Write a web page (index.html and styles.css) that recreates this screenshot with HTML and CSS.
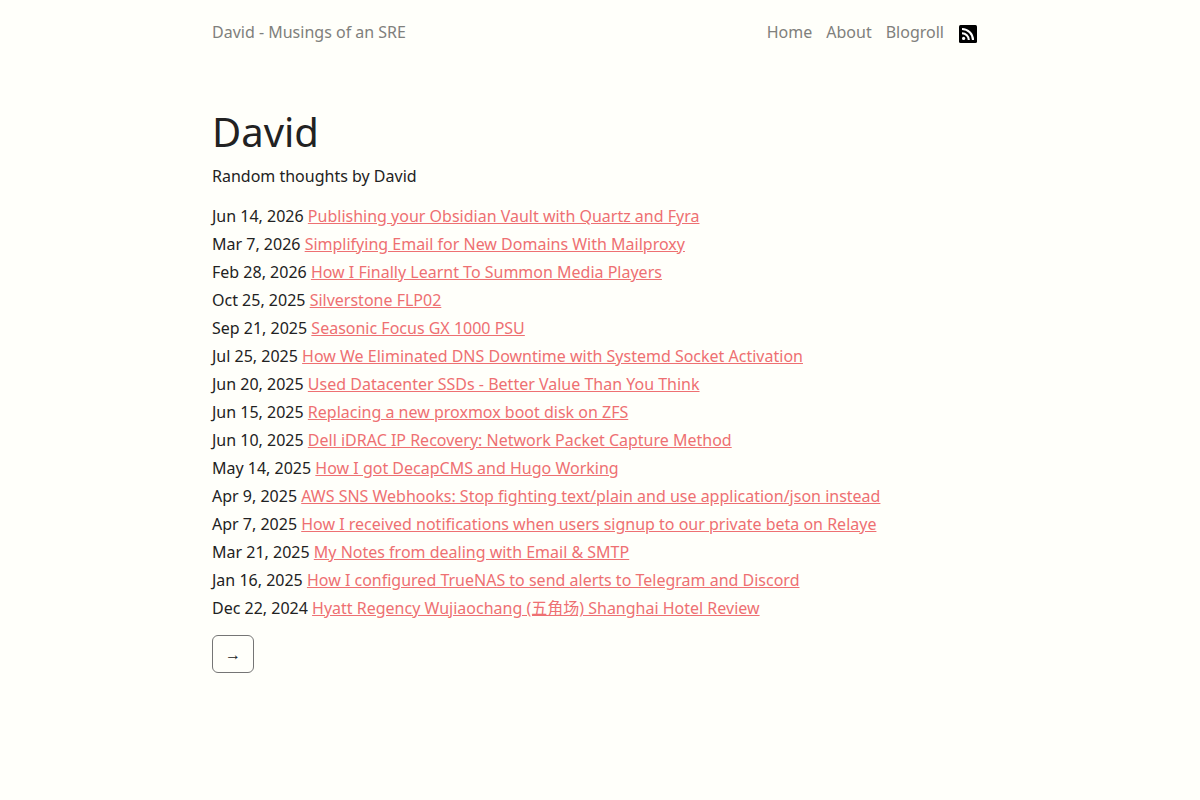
FILE: index.html
```html
<!DOCTYPE html>
<html lang="en">
<head>
<meta charset="utf-8">
<meta name="viewport" content="width=device-width, initial-scale=1">
<title>David - Musings of an SRE</title>
<link rel="stylesheet" href="styles.css">
</head>
<body>
<header class="container site-header">
  <a class="brand" href="/">David - Musings of an SRE</a>
  <nav class="site-nav">
    <a href="/">Home</a>
    <a href="/about/">About</a>
    <a href="/blogroll/">Blogroll</a>
    <a class="rss" href="/index.xml" aria-label="RSS feed"><svg class="rss-icon" viewBox="0 0 18 18" aria-hidden="true"><rect width="18" height="18" rx="1.5"/><g fill="none" stroke="#fff" stroke-width="2.1"><path d="M3 8.2A6.8 6.8 0 0 1 9.8 15M3 4A11 11 0 0 1 14 15"/></g><circle cx="4.6" cy="13.4" r="1.6" fill="#fff"/></svg></a>
  </nav>
</header>
<main class="container">
  <h1>David</h1>
  <p class="intro">Random thoughts by David</p>
  <ul class="posts">
    <li><time>Jun 14, 2026</time> <a href="#">Publishing your Obsidian Vault with Quartz and Fyra</a></li>
    <li><time>Mar 7, 2026</time> <a href="#">Simplifying Email for New Domains With Mailproxy</a></li>
    <li><time>Feb 28, 2026</time> <a href="#">How I Finally Learnt To Summon Media Players</a></li>
    <li><time>Oct 25, 2025</time> <a href="#">Silverstone FLP02</a></li>
    <li><time>Sep 21, 2025</time> <a href="#">Seasonic Focus GX 1000 PSU</a></li>
    <li><time>Jul 25, 2025</time> <a href="#">How We Eliminated DNS Downtime with Systemd Socket Activation</a></li>
    <li><time>Jun 20, 2025</time> <a href="#">Used Datacenter SSDs - Better Value Than You Think</a></li>
    <li><time>Jun 15, 2025</time> <a href="#">Replacing a new proxmox boot disk on ZFS</a></li>
    <li><time>Jun 10, 2025</time> <a href="#">Dell iDRAC IP Recovery: Network Packet Capture Method</a></li>
    <li><time>May 14, 2025</time> <a href="#">How I got DecapCMS and Hugo Working</a></li>
    <li><time>Apr 9, 2025</time> <a href="#">AWS SNS Webhooks: Stop fighting text/plain and use application/json instead</a></li>
    <li><time>Apr 7, 2025</time> <a href="#">How I received notifications when users signup to our private beta on Relaye</a></li>
    <li><time>Mar 21, 2025</time> <a href="#">My Notes from dealing with Email &amp; SMTP</a></li>
    <li><time>Jan 16, 2025</time> <a href="#">How I configured TrueNAS to send alerts to Telegram and Discord</a></li>
    <li><time>Dec 22, 2024</time> <a href="#">Hyatt Regency Wujiaochang (五角场) Shanghai Hotel Review</a></li>
  </ul>
  <a class="next" href="/page/2/" aria-label="Next page">→</a>
</main>
</body>
</html>
```
FILE: styles.css
```css
* { box-sizing: border-box; }

body {
  margin: 0;
  background: #fffffa;
  color: #222222;
  font: 16px/24px "Noto Sans", "Liberation Sans", "Noto Sans CJK SC", sans-serif;
}

.container {
  max-width: 800px;
  margin: 0 auto;
  padding: 0 12px;
}

.site-header {
  display: flex;
  justify-content: space-between;
  align-items: center;
  padding-top: 20px;
}

.site-header a {
  color: #80807c;
  text-decoration: none;
}

.site-nav {
  display: flex;
  gap: 14px;
  padding-right: 11px;
}

.site-nav .rss {
  display: flex;
  align-items: center;
  padding-left: 1px;
}

.rss-icon { width: 18px; height: 18px; margin-top: 4px; }

main.container { padding-top: 64px; }

h1 {
  margin: 0 0 8px;
  font-size: 40px;
  font-weight: 400;
  line-height: 48px;
}

.intro { margin: 0 0 16px; }

.posts {
  display: grid;
  gap: 4px;
  list-style: none;
  margin: 0 0 15px;
  padding: 0;
}

.posts a { color: #ee7072; }

.next {
  display: inline-block;
  padding: 6px 12px;
  border: 1px solid #757575;
  border-radius: 6px;
  color: #222222;
  text-decoration: none;
}
```
